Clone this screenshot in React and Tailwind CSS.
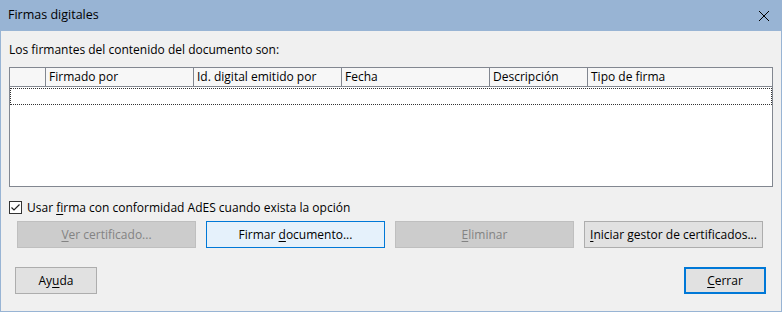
import React from "react";

const font = { fontFamily: '"Open Sans", "Noto Sans", sans-serif' };

function Btn({ children, className = "" }) {
  return (
    <div className={`flex items-center justify-center h-[27px] text-[12px] ${className}`}>
      {children}
    </div>
  );
}

export default function App() {
  const cols = [
    { w: 36, t: "" },
    { w: 148, t: "Firmado por" },
    { w: 148, t: "Id. digital emitido por" },
    { w: 148, t: "Fecha" },
    { w: 98, t: "Descripción" },
    { w: 0, t: "Tipo de firma" },
  ];
  return (
    <div className="w-[782px] h-[312px] flex flex-col bg-[#98b4d4] text-[#000]" style={font}>
      <div className="h-[31px] flex items-center justify-between pl-[8px] pr-[10px] text-[12.5px] text-black">
        <span>Firmas digitales</span>
        <svg width="12" height="12" viewBox="0 0 12 12" className="mr-[2px]">
          <path d="M1 1 L11 11 M11 1 L1 11" stroke="#000" strokeWidth="1" />
        </svg>
      </div>
      <div className="flex-1 mx-[1px] mb-[1px] bg-[#f0f0f0] flex flex-col pl-[8px] pr-[8px]">
        <div className="h-[36px] flex items-center text-[12px] pt-[1px]">
          Los firmantes del contenido del documento son:
        </div>
        <div className="h-[120px] border border-[#828790] bg-white flex flex-col">
          <div className="h-[19px] flex border-b border-[#828790] bg-[#f7f7f7] text-[12px]">
            {cols.map((c, i) => (
              <div
                key={i}
                className={`flex items-center pl-[3px] ${i < cols.length - 1 ? "border-r border-[#828790]" : "flex-1"}`}
                style={c.w ? { width: c.w } : undefined}
              >
                {c.t}
              </div>
            ))}
          </div>
          <div className="h-[17px] mt-[1px] border border-dotted border-[#333]" />
        </div>
        <div className="flex items-center mt-[13px] h-[15px] text-[12px]">
          <div className="w-[13px] h-[13px] border border-[#333] bg-white flex items-center justify-center">
            <svg width="11" height="11" viewBox="0 0 11 11">
              <path d="M1.5 5.5 L4 8 L9.5 2.5" stroke="#222" strokeWidth="1.2" fill="none" />
            </svg>
          </div>
          <span className="ml-[5px]">
            Usar <span className="underline underline-offset-2">f</span>irma con conformidad AdES cuando exista la opción
          </span>
        </div>
        <div className="flex mt-[6px] pl-[8px] gap-[10px]">
          <Btn className="w-[179px] bg-[#cccccc] border border-[#bfbfbf] text-[#838383]">
            <span><span className="underline underline-offset-2">V</span>er certificado...</span>
          </Btn>
          <Btn className="w-[179px] bg-[#e5f1fb] border border-[#0078d7]">
            <span>Firmar <span className="underline underline-offset-2">d</span>ocumento...</span>
          </Btn>
          <Btn className="w-[179px] bg-[#cccccc] border border-[#bfbfbf] text-[#838383]">
            <span><span className="underline underline-offset-2">E</span>liminar</span>
          </Btn>
          <Btn className="w-[179px] bg-[#e1e1e1] border border-[#adadad]">
            <span><span className="underline underline-offset-2">I</span>niciar gestor de certificados...</span>
          </Btn>
        </div>
        <div className="flex justify-between mt-[19px] pl-[6px] pr-[7px]">
          <Btn className="w-[82px] bg-[#e1e1e1] border border-[#adadad]">
            <span>Ay<span className="underline underline-offset-2">u</span>da</span>
          </Btn>
          <Btn className="w-[82px] bg-[#e1e1e1] border-2 border-[#0078d7]">
            <span><span className="underline underline-offset-2">C</span>errar</span>
          </Btn>
        </div>
      </div>
    </div>
  );
}
